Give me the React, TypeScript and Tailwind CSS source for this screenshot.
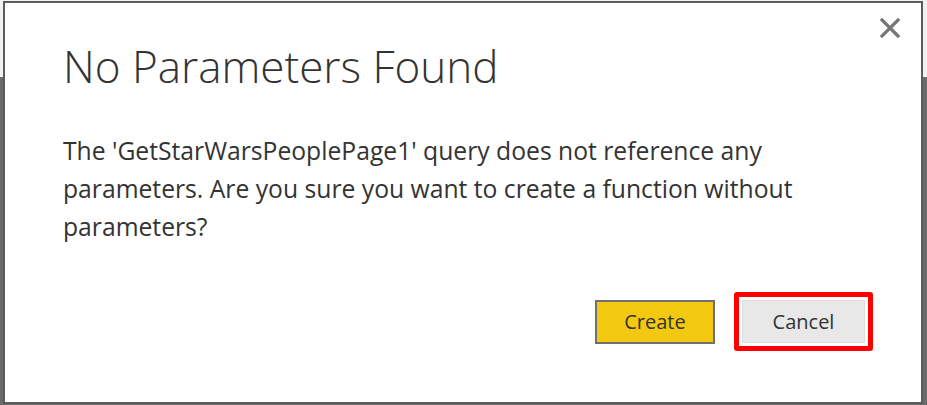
export default function App() {
  return (
    <div className="h-[405px] w-[927px] overflow-hidden bg-[linear-gradient(to_bottom,#f1f1f1_0px,#f1f1f1_77px,#6b6b6b_77px)] pt-px pl-[3px]">
      <div className="relative flex h-[403px] w-[920px] flex-col border-2 border-[#5c5c5c] bg-white font-['Open_Sans',sans-serif] text-[#333333]">
        {/* close button */}
        <button className="absolute top-[14px] right-[20px] flex h-[22px] w-[22px] items-center justify-center">
          <svg width="20" height="20" viewBox="0 0 20 20">
            <path d="M2 2 L18 18 M18 2 L2 18" stroke="#767676" strokeWidth="3.2" strokeLinecap="square" />
          </svg>
        </button>

        <h1 className="mt-[34px] ml-[58px] text-[44px] leading-[58px] font-light text-[#333333]">
          No Parameters Found
        </h1>

        <p className="mt-[37px] ml-[58px] w-[780px] text-[24.7px] leading-[38px]">
          The 'GetStarWarsPeoplePage1' query does not reference any
          parameters. Are you sure you want to create a function without
          parameters?
        </p>

        <div className="mt-auto mb-[51px] flex items-center justify-end gap-[19px] pr-[48px]">
          <button className="h-[44px] w-[120px] border-2 border-[#707070] bg-[#f2c811] text-[20px] text-[#333333]">
            Create
          </button>
          <div className="rounded-[3px] border-[5px] border-[#ff0000] p-[3px]">
            <button className="h-[43px] w-[123px] border border-[#dcdcdc] bg-[#e8e8e8] text-[20px] text-[#333333]">
              Cancel
            </button>
          </div>
        </div>
      </div>
    </div>
  );
}
